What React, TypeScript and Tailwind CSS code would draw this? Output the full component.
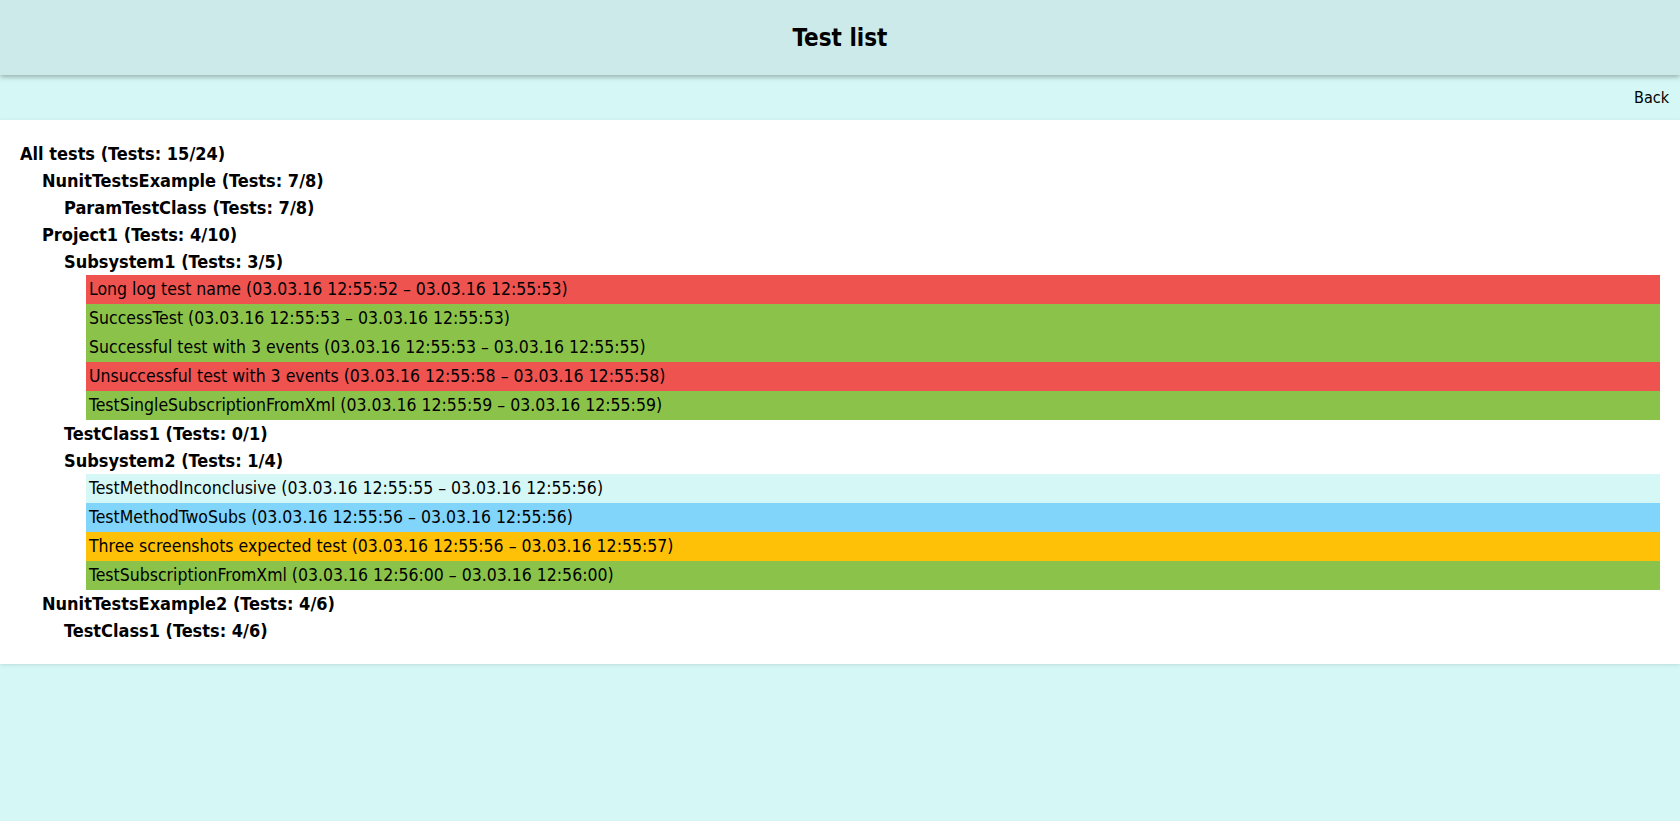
type Status = 'failed' | 'passed' | 'inconclusive' | 'skipped' | 'warning'

interface TestNode {
  name: string
  passed?: number
  total?: number
  status?: Status
  start?: string
  end?: string
  children?: TestNode[]
}

const tree: TestNode = {
  name: 'All tests',
  passed: 15,
  total: 24,
  children: [
    {
      name: 'NunitTestsExample',
      passed: 7,
      total: 8,
      children: [{ name: 'ParamTestClass', passed: 7, total: 8 }],
    },
    {
      name: 'Project1',
      passed: 4,
      total: 10,
      children: [
        {
          name: 'Subsystem1',
          passed: 3,
          total: 5,
          children: [
            { name: 'Long log test name', status: 'failed', start: '03.03.16 12:55:52', end: '03.03.16 12:55:53' },
            { name: 'SuccessTest', status: 'passed', start: '03.03.16 12:55:53', end: '03.03.16 12:55:53' },
            { name: 'Successful test with 3 events', status: 'passed', start: '03.03.16 12:55:53', end: '03.03.16 12:55:55' },
            { name: 'Unsuccessful test with 3 events', status: 'failed', start: '03.03.16 12:55:58', end: '03.03.16 12:55:58' },
            { name: 'TestSingleSubscriptionFromXml', status: 'passed', start: '03.03.16 12:55:59', end: '03.03.16 12:55:59' },
          ],
        },
        { name: 'TestClass1', passed: 0, total: 1 },
        {
          name: 'Subsystem2',
          passed: 1,
          total: 4,
          children: [
            { name: 'TestMethodInconclusive', status: 'inconclusive', start: '03.03.16 12:55:55', end: '03.03.16 12:55:56' },
            { name: 'TestMethodTwoSubs', status: 'skipped', start: '03.03.16 12:55:56', end: '03.03.16 12:55:56' },
            { name: 'Three screenshots expected test', status: 'warning', start: '03.03.16 12:55:56', end: '03.03.16 12:55:57' },
            { name: 'TestSubscriptionFromXml', status: 'passed', start: '03.03.16 12:56:00', end: '03.03.16 12:56:00' },
          ],
        },
      ],
    },
    {
      name: 'NunitTestsExample2',
      passed: 4,
      total: 6,
      children: [{ name: 'TestClass1', passed: 4, total: 6 }],
    },
  ],
}

const statusBg: Record<Status, string> = {
  failed: 'bg-[#ef5350]',
  passed: 'bg-[#8bc34a]',
  inconclusive: 'bg-[#d5f8f6]',
  skipped: 'bg-[#81d4fa]',
  warning: 'bg-[#ffc107]',
}

// padding per depth, written out so tailwind picks them up
const indent = ['pl-[20px]', 'pl-[42px]', 'pl-[64px]', 'pl-[86px]']

function Node({ node, depth }: { node: TestNode; depth: number }) {
  if (node.status) {
    return (
      <div className={`${indent[depth]} pr-[20px]`}>
        <div className={`h-[29px] flex items-center pl-[3px] text-[17.5px] ${statusBg[node.status]}`}>
          {node.name} ({node.start} – {node.end})
        </div>
      </div>
    )
  }
  return (
    <>
      <div className={`${indent[depth]} h-[27px] flex items-center font-bold text-[18px]`}>
        {node.name} (Tests: {node.passed}/{node.total})
      </div>
      {node.children?.map((child, i) => (
        <Node key={i} node={child} depth={depth + 1} />
      ))}
    </>
  )
}

export default function App() {
  return (
    <div className="min-h-screen bg-[#d5f8f6] text-black [font-family:'DejaVu_Sans_Condensed','DejaVu_Sans',sans-serif] [font-stretch:condensed]">
      <header className="relative z-10 h-[75px] bg-[#cceaea] flex items-center justify-center shadow-[0_2px_5px_rgba(0,0,0,0.3)]">
        <h1 className="text-[24px] font-bold">Test list</h1>
      </header>
      <div className="h-[45px] flex items-center justify-end pr-[11px] text-[16px]">
        <a href="#">Back</a>
      </div>
      <main className="bg-white py-[20px] shadow-[0_1px_4px_rgba(0,0,0,0.12)]">
        <Node node={tree} depth={0} />
      </main>
    </div>
  )
}
